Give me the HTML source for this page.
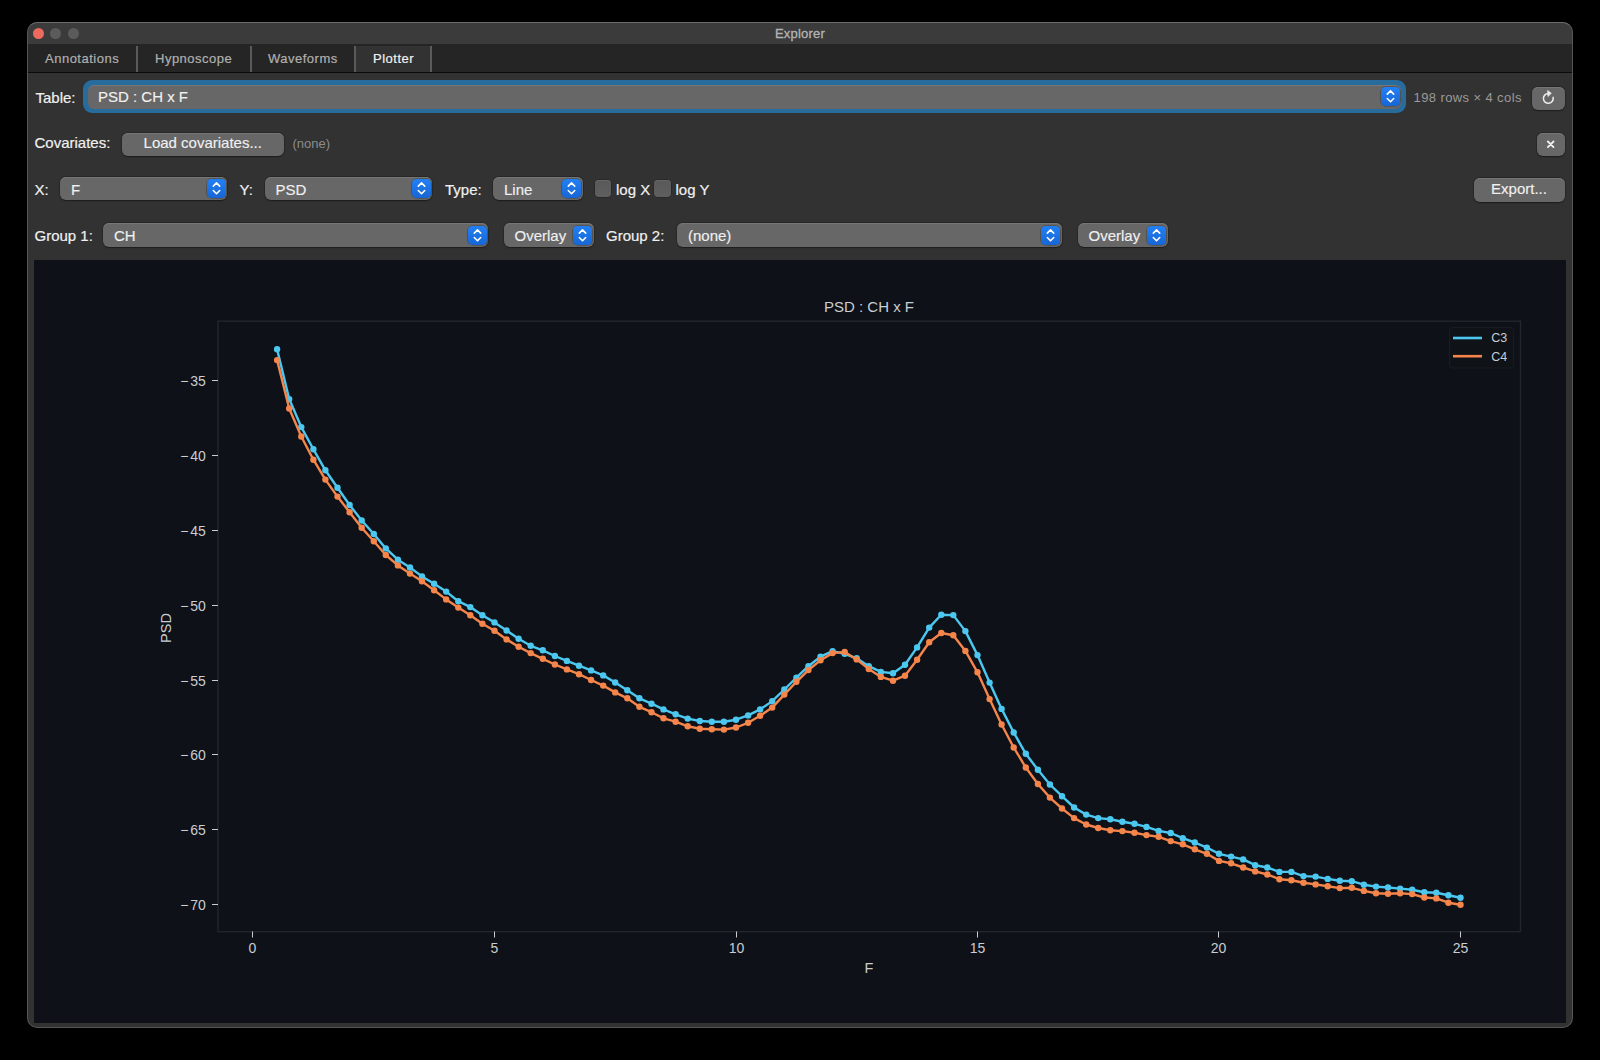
<!DOCTYPE html>
<html><head><meta charset="utf-8">
<style>
*{margin:0;padding:0;box-sizing:border-box}
html,body{width:1600px;height:1060px;background:#000;overflow:hidden}
body{font-family:"Liberation Sans",sans-serif;position:relative}
.a{position:absolute}
.win{left:27px;top:22px;width:1546px;height:1006px;border-radius:10px;background:#323232;overflow:hidden}
.titlebar{left:0;top:0;width:1546px;height:22px;background:#3b3b3b}
.frame{left:0;top:0;width:1546px;height:1006px;border-radius:10px;border:1px solid #565656;border-top:1.6px solid #6c6c6c}
.title{left:0;top:4.6px;width:1546px;text-align:center;color:#b4b4b4;font-size:13px;line-height:14px;letter-spacing:0.2px;-webkit-text-stroke:0.3px #b4b4b4}
.dot{width:11.2px;height:11.2px;border-radius:50%;top:5.8px}
.tabbar{left:1px;top:22px;width:1544px;height:29px;background:#252525;border-bottom:1px solid #0b0b0b}
.tabsel{left:328px;top:23.8px;width:76px;height:26px;background:#323232}
.sep{top:24px;width:2px;height:25.5px;background:#5a5a5a}
.tab{top:29.3px;font-size:13px;line-height:15px;color:#b0b0b0;white-space:nowrap;letter-spacing:0.5px;-webkit-text-stroke:0.2px #b0b0b0}
.lab{font-size:15px;line-height:17px;color:#f0f0f0;white-space:nowrap;margin-top:-2.3px;-webkit-text-stroke:0.2px #f0f0f0}
.combo{background:#676767;border-radius:6px;box-shadow:inset 0 1px 0 #767676, 0 0 0 0.5px rgba(0,0,0,.3), 0 0.5px 1.5px rgba(0,0,0,.35)}
.ctext{font-size:15px;line-height:17px;color:#f0f0f0;white-space:nowrap;margin-top:-2.3px;-webkit-text-stroke:0.15px #f0f0f0}
.step{width:19px;height:19px;border-radius:4.5px;margin-top:-0.4px;background:linear-gradient(#2280f4,#1766d4);box-shadow:0 0 0 0.6px rgba(0,0,0,.35)}
.step svg{position:absolute;left:0;top:0}
.btn{background:#676767;border-radius:6px;box-shadow:inset 0 1px 0 #767676, 0 0 0 0.5px rgba(0,0,0,.3), 0 0.5px 1.5px rgba(0,0,0,.35)}
.cb{width:16.5px;height:16.5px;border-radius:4px;margin-top:-0.4px;background:linear-gradient(#595959,#5f5f5f);box-shadow:inset 0 1px 0 #666, 0 0 0 0.5px rgba(0,0,0,.35)}
.plotbg{left:7px;top:238px;width:1532px;height:763px;background:#0e1117}
svg.plot{position:absolute;left:0;top:0}
.tk{font-family:"Liberation Sans",sans-serif;font-size:14px;fill:#c9cdd4}
.ttl{font-family:"Liberation Sans",sans-serif;font-size:15px;fill:#c9cdd4}
.lbl{font-family:"Liberation Sans",sans-serif;font-size:14.5px;fill:#c9cdd4}
.lg{font-family:"Liberation Sans",sans-serif;font-size:12.5px;fill:#c9cdd4}
</style></head><body>
<div class="a win">
  <div class="a titlebar"></div>
  <div class="a dot" style="left:5.5px;background:#ec6a5e"></div>
  <div class="a dot" style="left:23.15px;background:#5b5b5b"></div>
  <div class="a dot" style="left:40.65px;background:#5b5b5b"></div>
  <div class="a title">Explorer</div>
  <div class="a tabbar"></div>
  <div class="a tabsel"></div>
  <div class="a sep" style="left:109px"></div>
  <div class="a sep" style="left:223px"></div>
  <div class="a sep" style="left:327px"></div>
  <div class="a sep" style="left:403px"></div>
  <div class="a tab" style="left:18px">Annotations</div>
  <div class="a tab" style="left:128px">Hypnoscope</div>
  <div class="a tab" style="left:241px">Waveforms</div>
  <div class="a tab" style="left:346px;color:#f0f0f0;-webkit-text-stroke:0.2px #f0f0f0">Plotter</div>

  <!-- Row 1: Table -->
  <div class="a lab" style="left:8.5px;top:69px">Table:</div>
  <div class="a" style="left:56px;top:58px;width:1323px;height:33px;border-radius:9px;background:#286c9e"></div>
  <div class="a combo" style="left:60.5px;top:63px;width:1313.5px;height:23.5px;box-shadow:none;border-top:1px solid #777"></div>
  <div class="a ctext" style="left:71px;top:68.5px">PSD : CH x F</div>
  <div class="a step" style="left:1354px;top:65.5px"><svg width="19" height="19" viewBox="0 0 19 19"><path d="M6.3,7.1 L9.5,3.9 L12.7,7.1 M6.3,11.5 L9.5,14.7 L12.7,11.5" fill="none" stroke="#fff" stroke-width="1.6" stroke-linecap="round" stroke-linejoin="round"/></svg></div>
  <div class="a" style="left:1386.5px;top:68px;font-size:13px;line-height:15px;color:#9a9a9a;white-space:nowrap;letter-spacing:0.4px">198 rows × 4 cols</div>
  <div class="a btn" style="left:1505px;top:65px;width:33px;height:23px">
    <svg class="a" style="left:0;top:0" width="33" height="23" viewBox="0 0 33 23"><path d="M16.6,6.5 A4.9,4.9 0 1 0 21.1,10.4" fill="none" stroke="#ececec" stroke-width="1.55" stroke-linecap="round"/><path d="M15.6,3.4 L19.4,6.3 L15.9,9.6 Z" fill="#ececec" stroke="#ececec" stroke-width="0.6" stroke-linejoin="round"/></svg>
  </div>

  <!-- Row 2: Covariates -->
  <div class="a lab" style="left:7.5px;top:114.5px">Covariates:</div>
  <div class="a btn" style="left:95px;top:110.5px;width:161.5px;height:23.5px"></div>
  <div class="a ctext" style="left:95px;top:114.5px;width:161.5px;text-align:center">Load covariates...</div>
  <div class="a" style="left:265.5px;top:114px;font-size:13px;line-height:15px;color:#8c8c8c">(none)</div>
  <div class="a btn" style="left:1510px;top:111px;width:27.5px;height:23px">
    <svg class="a" style="left:0;top:0" width="28" height="23" viewBox="0 0 28 23"><path d="M10.9,8.5 L16.5,14.1 M16.5,8.5 L10.9,14.1" stroke="#f0f0f0" stroke-width="1.8" stroke-linecap="round"/></svg>
  </div>

  <!-- Row 3: X / Y / Type -->
  <div class="a lab" style="left:7.5px;top:161px">X:</div>
  <div class="a combo" style="left:33px;top:154.5px;width:167px;height:23px"></div>
  <div class="a ctext" style="left:44px;top:161px">F</div>
  <div class="a step" style="left:179.5px;top:157px"><svg width="19" height="19" viewBox="0 0 19 19"><path d="M6.3,7.1 L9.5,3.9 L12.7,7.1 M6.3,11.5 L9.5,14.7 L12.7,11.5" fill="none" stroke="#fff" stroke-width="1.6" stroke-linecap="round" stroke-linejoin="round"/></svg></div>
  <div class="a lab" style="left:212.5px;top:161px">Y:</div>
  <div class="a combo" style="left:238px;top:154.5px;width:167px;height:23px"></div>
  <div class="a ctext" style="left:248.5px;top:161px">PSD</div>
  <div class="a step" style="left:384.5px;top:157px"><svg width="19" height="19" viewBox="0 0 19 19"><path d="M6.3,7.1 L9.5,3.9 L12.7,7.1 M6.3,11.5 L9.5,14.7 L12.7,11.5" fill="none" stroke="#fff" stroke-width="1.6" stroke-linecap="round" stroke-linejoin="round"/></svg></div>
  <div class="a lab" style="left:418px;top:161px">Type:</div>
  <div class="a combo" style="left:466px;top:154.5px;width:90px;height:23px"></div>
  <div class="a ctext" style="left:477px;top:161px">Line</div>
  <div class="a step" style="left:535px;top:157px"><svg width="19" height="19" viewBox="0 0 19 19"><path d="M6.3,7.1 L9.5,3.9 L12.7,7.1 M6.3,11.5 L9.5,14.7 L12.7,11.5" fill="none" stroke="#fff" stroke-width="1.6" stroke-linecap="round" stroke-linejoin="round"/></svg></div>
  <div class="a cb" style="left:567.5px;top:158.5px"></div>
  <div class="a lab" style="left:589px;top:161px">log X</div>
  <div class="a cb" style="left:627px;top:158.5px"></div>
  <div class="a lab" style="left:648.5px;top:161px">log Y</div>
  <div class="a btn" style="left:1446.5px;top:156px;width:91px;height:23.5px"></div>
  <div class="a ctext" style="left:1446.5px;top:160.5px;width:91px;text-align:center">Export...</div>

  <!-- Row 4: Groups -->
  <div class="a lab" style="left:7.5px;top:207px">Group 1:</div>
  <div class="a combo" style="left:76px;top:201px;width:385px;height:23.5px"></div>
  <div class="a ctext" style="left:87px;top:207px">CH</div>
  <div class="a step" style="left:440.5px;top:204px"><svg width="19" height="19" viewBox="0 0 19 19"><path d="M6.3,7.1 L9.5,3.9 L12.7,7.1 M6.3,11.5 L9.5,14.7 L12.7,11.5" fill="none" stroke="#fff" stroke-width="1.6" stroke-linecap="round" stroke-linejoin="round"/></svg></div>
  <div class="a combo" style="left:477px;top:201.2px;width:89.5px;height:23.5px"></div>
  <div class="a ctext" style="left:487.5px;top:207px">Overlay</div>
  <div class="a step" style="left:546px;top:204px"><svg width="19" height="19" viewBox="0 0 19 19"><path d="M6.3,7.1 L9.5,3.9 L12.7,7.1 M6.3,11.5 L9.5,14.7 L12.7,11.5" fill="none" stroke="#fff" stroke-width="1.6" stroke-linecap="round" stroke-linejoin="round"/></svg></div>
  <div class="a lab" style="left:579px;top:207px">Group 2:</div>
  <div class="a combo" style="left:650px;top:201px;width:385px;height:23.5px"></div>
  <div class="a ctext" style="left:661px;top:207px">(none)</div>
  <div class="a step" style="left:1014px;top:204px"><svg width="19" height="19" viewBox="0 0 19 19"><path d="M6.3,7.1 L9.5,3.9 L12.7,7.1 M6.3,11.5 L9.5,14.7 L12.7,11.5" fill="none" stroke="#fff" stroke-width="1.6" stroke-linecap="round" stroke-linejoin="round"/></svg></div>
  <div class="a combo" style="left:1050.5px;top:201px;width:90px;height:23.5px"></div>
  <div class="a ctext" style="left:1061.5px;top:207px">Overlay</div>
  <div class="a step" style="left:1119.5px;top:204px"><svg width="19" height="19" viewBox="0 0 19 19"><path d="M6.3,7.1 L9.5,3.9 L12.7,7.1 M6.3,11.5 L9.5,14.7 L12.7,11.5" fill="none" stroke="#fff" stroke-width="1.6" stroke-linecap="round" stroke-linejoin="round"/></svg></div>

  <div class="a plotbg"></div>
  <div class="a frame"></div>
</div>
<svg class="plot" width="1600" height="1060" viewBox="0 0 1600 1060">
<rect x="218" y="321.2" width="1302.5" height="610.5" fill="none" stroke="#21252c" stroke-width="1.5"/>
<line x1="212" y1="380.5" x2="218" y2="380.5" stroke="#c9ccd1" stroke-width="1"/>
<text x="205.8" y="385.7" text-anchor="end" class="tk">−<tspan dx="1.8">35</tspan></text>
<line x1="212" y1="455.5" x2="218" y2="455.5" stroke="#c9ccd1" stroke-width="1"/>
<text x="205.8" y="460.7" text-anchor="end" class="tk">−<tspan dx="1.8">40</tspan></text>
<line x1="212" y1="530.5" x2="218" y2="530.5" stroke="#c9ccd1" stroke-width="1"/>
<text x="205.8" y="535.7" text-anchor="end" class="tk">−<tspan dx="1.8">45</tspan></text>
<line x1="212" y1="605.5" x2="218" y2="605.5" stroke="#c9ccd1" stroke-width="1"/>
<text x="205.8" y="610.7" text-anchor="end" class="tk">−<tspan dx="1.8">50</tspan></text>
<line x1="212" y1="680.5" x2="218" y2="680.5" stroke="#c9ccd1" stroke-width="1"/>
<text x="205.8" y="685.7" text-anchor="end" class="tk">−<tspan dx="1.8">55</tspan></text>
<line x1="212" y1="754.5" x2="218" y2="754.5" stroke="#c9ccd1" stroke-width="1"/>
<text x="205.8" y="759.7" text-anchor="end" class="tk">−<tspan dx="1.8">60</tspan></text>
<line x1="212" y1="829.5" x2="218" y2="829.5" stroke="#c9ccd1" stroke-width="1"/>
<text x="205.8" y="834.7" text-anchor="end" class="tk">−<tspan dx="1.8">65</tspan></text>
<line x1="212" y1="904.5" x2="218" y2="904.5" stroke="#c9ccd1" stroke-width="1"/>
<text x="205.8" y="909.7" text-anchor="end" class="tk">−<tspan dx="1.8">70</tspan></text>
<line x1="252.5" y1="931.5" x2="252.5" y2="937.5" stroke="#c9ccd1" stroke-width="1"/>
<text x="252.5" y="953.3" text-anchor="middle" class="tk">0</text>
<line x1="494.5" y1="931.5" x2="494.5" y2="937.5" stroke="#c9ccd1" stroke-width="1"/>
<text x="494.5" y="953.3" text-anchor="middle" class="tk">5</text>
<line x1="736.5" y1="931.5" x2="736.5" y2="937.5" stroke="#c9ccd1" stroke-width="1"/>
<text x="736.5" y="953.3" text-anchor="middle" class="tk">10</text>
<line x1="977.5" y1="931.5" x2="977.5" y2="937.5" stroke="#c9ccd1" stroke-width="1"/>
<text x="977.5" y="953.3" text-anchor="middle" class="tk">15</text>
<line x1="1218.5" y1="931.5" x2="1218.5" y2="937.5" stroke="#c9ccd1" stroke-width="1"/>
<text x="1218.5" y="953.3" text-anchor="middle" class="tk">20</text>
<line x1="1460.5" y1="931.5" x2="1460.5" y2="937.5" stroke="#c9ccd1" stroke-width="1"/>
<text x="1460.5" y="953.3" text-anchor="middle" class="tk">25</text>
<text x="869" y="312" text-anchor="middle" class="ttl">PSD : CH x F</text>
<text x="869" y="973" text-anchor="middle" class="lbl">F</text>
<text x="0" y="0" transform="translate(170.8 628) rotate(-90)" text-anchor="middle" class="lbl">PSD</text>
<path d="M277.1,349.3 L289.2,399.1 L301.3,427.1 L313.4,449.3 L325.4,470.3 L337.5,487.7 L349.6,505.0 L361.7,520.5 L373.8,534.0 L385.8,548.4 L397.9,559.7 L410.0,567.5 L422.0,576.4 L434.1,583.8 L446.2,591.6 L458.3,601.2 L470.3,607.1 L482.4,615.2 L494.5,622.4 L506.6,630.5 L518.6,638.7 L530.7,645.8 L542.8,650.3 L554.9,656.0 L566.9,660.9 L579.0,665.7 L591.1,670.4 L603.2,675.4 L615.2,682.5 L627.3,690.2 L639.4,698.3 L651.5,703.7 L663.5,709.4 L675.6,714.3 L687.7,718.6 L699.8,721.0 L711.8,721.8 L723.9,721.8 L736.0,719.7 L748.1,715.4 L760.1,709.4 L772.2,701.2 L784.3,689.5 L796.4,677.6 L808.4,666.2 L820.5,656.6 L832.6,651.2 L844.7,653.8 L856.7,658.3 L868.8,666.2 L880.9,671.9 L893.0,673.3 L905.0,664.8 L917.1,647.4 L929.2,627.6 L941.3,614.7 L953.3,615.1 L965.4,631.1 L977.5,655.1 L989.6,682.6 L1001.6,708.9 L1013.7,732.5 L1025.8,753.8 L1037.9,769.8 L1049.9,784.5 L1062.0,796.2 L1074.1,807.5 L1086.2,814.6 L1098.2,818.1 L1110.3,819.3 L1122.4,821.7 L1134.5,823.8 L1146.5,826.9 L1158.6,830.9 L1170.7,833.0 L1182.8,838.2 L1194.8,842.5 L1206.9,847.6 L1219.0,853.8 L1231.1,856.6 L1243.2,859.4 L1255.2,865.2 L1267.3,867.5 L1279.4,871.9 L1291.4,871.9 L1303.5,876.1 L1315.6,876.6 L1327.7,878.9 L1339.8,880.8 L1351.8,881.2 L1363.9,884.7 L1376.0,886.6 L1388.0,887.5 L1400.1,888.6 L1412.2,889.7 L1424.3,892.2 L1436.3,892.8 L1448.4,895.3 L1460.5,897.7" fill="none" stroke="#4cc8f0" stroke-width="2.4" stroke-linejoin="round" stroke-linecap="round"/>
<path d="M277.1,349.3h0 M289.2,399.1h0 M301.3,427.1h0 M313.4,449.3h0 M325.4,470.3h0 M337.5,487.7h0 M349.6,505.0h0 M361.7,520.5h0 M373.8,534.0h0 M385.8,548.4h0 M397.9,559.7h0 M410.0,567.5h0 M422.0,576.4h0 M434.1,583.8h0 M446.2,591.6h0 M458.3,601.2h0 M470.3,607.1h0 M482.4,615.2h0 M494.5,622.4h0 M506.6,630.5h0 M518.6,638.7h0 M530.7,645.8h0 M542.8,650.3h0 M554.9,656.0h0 M566.9,660.9h0 M579.0,665.7h0 M591.1,670.4h0 M603.2,675.4h0 M615.2,682.5h0 M627.3,690.2h0 M639.4,698.3h0 M651.5,703.7h0 M663.5,709.4h0 M675.6,714.3h0 M687.7,718.6h0 M699.8,721.0h0 M711.8,721.8h0 M723.9,721.8h0 M736.0,719.7h0 M748.1,715.4h0 M760.1,709.4h0 M772.2,701.2h0 M784.3,689.5h0 M796.4,677.6h0 M808.4,666.2h0 M820.5,656.6h0 M832.6,651.2h0 M844.7,653.8h0 M856.7,658.3h0 M868.8,666.2h0 M880.9,671.9h0 M893.0,673.3h0 M905.0,664.8h0 M917.1,647.4h0 M929.2,627.6h0 M941.3,614.7h0 M953.3,615.1h0 M965.4,631.1h0 M977.5,655.1h0 M989.6,682.6h0 M1001.6,708.9h0 M1013.7,732.5h0 M1025.8,753.8h0 M1037.9,769.8h0 M1049.9,784.5h0 M1062.0,796.2h0 M1074.1,807.5h0 M1086.2,814.6h0 M1098.2,818.1h0 M1110.3,819.3h0 M1122.4,821.7h0 M1134.5,823.8h0 M1146.5,826.9h0 M1158.6,830.9h0 M1170.7,833.0h0 M1182.8,838.2h0 M1194.8,842.5h0 M1206.9,847.6h0 M1219.0,853.8h0 M1231.1,856.6h0 M1243.2,859.4h0 M1255.2,865.2h0 M1267.3,867.5h0 M1279.4,871.9h0 M1291.4,871.9h0 M1303.5,876.1h0 M1315.6,876.6h0 M1327.7,878.9h0 M1339.8,880.8h0 M1351.8,881.2h0 M1363.9,884.7h0 M1376.0,886.6h0 M1388.0,887.5h0 M1400.1,888.6h0 M1412.2,889.7h0 M1424.3,892.2h0 M1436.3,892.8h0 M1448.4,895.3h0 M1460.5,897.7h0" fill="none" stroke="#4cc8f0" stroke-width="6.4" stroke-linecap="round"/>
<path d="M277.1,360.1 L289.2,408.5 L301.3,436.5 L313.4,459.7 L325.4,479.6 L337.5,496.6 L349.6,512.2 L361.7,527.8 L373.8,541.2 L385.8,555.0 L397.9,565.4 L410.0,573.6 L422.0,581.2 L434.1,590.2 L446.2,599.4 L458.3,607.6 L470.3,615.3 L482.4,623.7 L494.5,630.8 L506.6,639.4 L518.6,646.8 L530.7,653.1 L542.8,658.8 L554.9,664.5 L566.9,669.4 L579.0,674.2 L591.1,680.0 L603.2,685.6 L615.2,692.4 L627.3,698.3 L639.4,706.8 L651.5,712.2 L663.5,718.3 L675.6,721.7 L687.7,726.3 L699.8,728.7 L711.8,729.2 L723.9,729.6 L736.0,727.5 L748.1,722.8 L760.1,715.8 L772.2,707.6 L784.3,694.6 L796.4,681.8 L808.4,670.1 L820.5,660.2 L832.6,653.1 L844.7,651.9 L856.7,659.4 L868.8,669.1 L880.9,676.9 L893.0,680.7 L905.0,675.7 L917.1,659.7 L929.2,642.2 L941.3,633.0 L953.3,635.3 L965.4,650.9 L977.5,672.3 L989.6,699.1 L1001.6,724.5 L1013.7,747.5 L1025.8,767.5 L1037.9,784.0 L1049.9,797.6 L1062.0,808.5 L1074.1,818.1 L1086.2,824.5 L1098.2,828.0 L1110.3,830.2 L1122.4,831.1 L1134.5,832.7 L1146.5,835.1 L1158.6,836.8 L1170.7,841.1 L1182.8,844.3 L1194.8,849.3 L1206.9,853.8 L1219.0,860.9 L1231.1,863.3 L1243.2,867.5 L1255.2,871.4 L1267.3,874.5 L1279.4,879.2 L1291.4,880.3 L1303.5,882.8 L1315.6,884.4 L1327.7,886.2 L1339.8,888.1 L1351.8,887.8 L1363.9,890.9 L1376.0,893.3 L1388.0,893.8 L1400.1,893.3 L1412.2,894.1 L1424.3,897.5 L1436.3,898.4 L1448.4,902.7 L1460.5,904.7" fill="none" stroke="#f5854a" stroke-width="2.4" stroke-linejoin="round" stroke-linecap="round"/>
<path d="M277.1,360.1h0 M289.2,408.5h0 M301.3,436.5h0 M313.4,459.7h0 M325.4,479.6h0 M337.5,496.6h0 M349.6,512.2h0 M361.7,527.8h0 M373.8,541.2h0 M385.8,555.0h0 M397.9,565.4h0 M410.0,573.6h0 M422.0,581.2h0 M434.1,590.2h0 M446.2,599.4h0 M458.3,607.6h0 M470.3,615.3h0 M482.4,623.7h0 M494.5,630.8h0 M506.6,639.4h0 M518.6,646.8h0 M530.7,653.1h0 M542.8,658.8h0 M554.9,664.5h0 M566.9,669.4h0 M579.0,674.2h0 M591.1,680.0h0 M603.2,685.6h0 M615.2,692.4h0 M627.3,698.3h0 M639.4,706.8h0 M651.5,712.2h0 M663.5,718.3h0 M675.6,721.7h0 M687.7,726.3h0 M699.8,728.7h0 M711.8,729.2h0 M723.9,729.6h0 M736.0,727.5h0 M748.1,722.8h0 M760.1,715.8h0 M772.2,707.6h0 M784.3,694.6h0 M796.4,681.8h0 M808.4,670.1h0 M820.5,660.2h0 M832.6,653.1h0 M844.7,651.9h0 M856.7,659.4h0 M868.8,669.1h0 M880.9,676.9h0 M893.0,680.7h0 M905.0,675.7h0 M917.1,659.7h0 M929.2,642.2h0 M941.3,633.0h0 M953.3,635.3h0 M965.4,650.9h0 M977.5,672.3h0 M989.6,699.1h0 M1001.6,724.5h0 M1013.7,747.5h0 M1025.8,767.5h0 M1037.9,784.0h0 M1049.9,797.6h0 M1062.0,808.5h0 M1074.1,818.1h0 M1086.2,824.5h0 M1098.2,828.0h0 M1110.3,830.2h0 M1122.4,831.1h0 M1134.5,832.7h0 M1146.5,835.1h0 M1158.6,836.8h0 M1170.7,841.1h0 M1182.8,844.3h0 M1194.8,849.3h0 M1206.9,853.8h0 M1219.0,860.9h0 M1231.1,863.3h0 M1243.2,867.5h0 M1255.2,871.4h0 M1267.3,874.5h0 M1279.4,879.2h0 M1291.4,880.3h0 M1303.5,882.8h0 M1315.6,884.4h0 M1327.7,886.2h0 M1339.8,888.1h0 M1351.8,887.8h0 M1363.9,890.9h0 M1376.0,893.3h0 M1388.0,893.8h0 M1400.1,893.3h0 M1412.2,894.1h0 M1424.3,897.5h0 M1436.3,898.4h0 M1448.4,902.7h0 M1460.5,904.7h0" fill="none" stroke="#f5854a" stroke-width="6.4" stroke-linecap="round"/>
<rect x="1449.5" y="327.5" width="64" height="40.5" rx="3" fill="#0f1217" stroke="#191c22" stroke-width="1"/>
<line x1="1453" y1="338" x2="1482" y2="338" stroke="#4cc8f0" stroke-width="2.6"/>
<line x1="1453" y1="356.2" x2="1482" y2="356.2" stroke="#f5854a" stroke-width="2.6"/>
<text x="1491.2" y="342.3" class="lg">C3</text>
<text x="1491.2" y="360.5" class="lg">C4</text>
</svg>
</body></html>
